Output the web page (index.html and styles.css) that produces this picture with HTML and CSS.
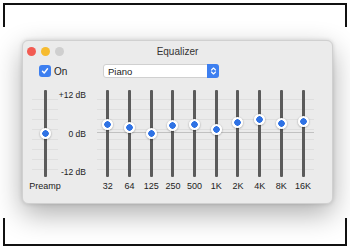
FILE: index.html
```html
<!DOCTYPE html>
<html lang="en">
<head>
    <meta charset="UTF-8">
    <title>Equalizer</title>
    <link rel="stylesheet" href="styles.css">
</head>
<body>
    <div class="frame">
        <div class="window">
            <div class="titlebar">
                <div class="lights">
                    <span class="light red"></span>
                    <span class="light yellow"></span>
                    <span class="light gray"></span>
                </div>
                <div class="title">Equalizer</div>
            </div>

            <div class="controls">
                <label class="toggle">
                    <span class="checkbox">
                        <svg width="8" height="8" viewBox="0 0 8 8"><path d="M1.5 4.2 L3.2 6 L6.5 1.8" fill="none" stroke="#fff" stroke-width="1.4" stroke-linecap="round" stroke-linejoin="round"/></svg>
                    </span>
                    On
                </label>
                <div class="popup">
                    <span>Piano</span>
                    <span class="stepper">
                        <svg width="7" height="10" viewBox="0 0 7 10"><path d="M1.5 4 L3.5 2 L5.5 4 M1.5 6 L3.5 8 L5.5 6" fill="none" stroke="#fff" stroke-width="1.1" stroke-linecap="round" stroke-linejoin="round"/></svg>
                    </span>
                </div>
            </div>

            <div class="sliders">
                <div class="band preamp">
                    <div class="track-area">
                        <div class="track"></div>
                        <span class="knob" style="top: 43px"></span>
                    </div>
                    <div class="label">Preamp</div>
                </div>
                <div class="scale">
                    <span>+12 dB</span>
                    <span>0 dB</span>
                    <span>-12 dB</span>
                </div>
                <div class="bands" id="bands"></div>
            </div>
        </div>
    </div>

    <script>
        // Piano preset, gain in dB for each band
        const bands = [
            { label: '32', gain: 2.7 },
            { label: '64', gain: 1.7 },
            { label: '125', gain: 0 },
            { label: '250', gain: 2.4 },
            { label: '500', gain: 2.7 },
            { label: '1K', gain: 1.2 },
            { label: '2K', gain: 3.3 },
            { label: '4K', gain: 4.2 },
            { label: '8K', gain: 3 },
            { label: '16K', gain: 3.6 }
        ];

        const container = document.getElementById('bands');
        bands.forEach(band => {
            // 0 dB sits 43px down the track, 12 dB is 40px
            const top = 43 - band.gain * 40 / 12;
            const el = document.createElement('div');
            el.className = 'band';
            el.innerHTML = `
                <div class="track-area">
                    <div class="track"></div>
                    <span class="knob" style="top: ${top.toFixed(1)}px"></span>
                </div>
                <div class="label">${band.label}</div>
            `;
            container.appendChild(el);
        });
    </script>
</body>
</html>
```

FILE: styles.css
```css
* {
    margin: 0;
    padding: 0;
    box-sizing: border-box;
}

body {
    background: #ffffff;
    font-family: 'Liberation Sans', Arial, sans-serif;
    color: #222;
}

/* Outer frame, only the corners of the sides are drawn */
.frame {
    position: relative;
    margin: 3px 0 0 3px;
    width: 344px;
    height: 243px;
    border-top: 2px solid #111;
    border-bottom: 2px solid #111;
    padding: 35px 0 0 19px;
}

.frame::before,
.frame::after {
    content: '';
    position: absolute;
    left: 0;
    right: 0;
    border-left: 2px solid #111;
    border-right: 2px solid #111;
}

.frame::before {
    top: 0;
    height: 22px;
}

.frame::after {
    bottom: 0;
    height: 26px;
}

/* Window */
.window {
    width: 311px;
    height: 164px;
    background: #ebebeb;
    border: 1px solid #d0d0d0;
    border-radius: 6px;
    box-shadow: 0 10px 28px rgba(0,0,0,0.32), 0 0 4px rgba(0,0,0,0.15);
}

.titlebar {
    position: relative;
    height: 21px;
    display: flex;
    align-items: center;
    padding-left: 4px;
}

.lights {
    display: flex;
    gap: 5px;
}

.light {
    width: 9px;
    height: 9px;
    border-radius: 50%;
}

.red { background: #f25b52; }
.yellow { background: #f6bb2f; }
.gray { background: #cfcfcf; }

.title {
    position: absolute;
    left: 0;
    right: 0;
    text-align: center;
    font-size: 10px;
    color: #333;
}

.controls {
    margin-top: 2px;
    height: 14px;
    display: flex;
    align-items: center;
    padding-left: 16px;
}

.toggle {
    display: flex;
    align-items: center;
    gap: 3px;
    font-size: 10px;
    width: 64px;
}

.checkbox {
    width: 12px;
    height: 12px;
    border-radius: 3px;
    background: #3d7ff0;
    display: flex;
    align-items: center;
    justify-content: center;
}

.popup {
    width: 116px;
    height: 14px;
    background: #fff;
    border: 1px solid #d0d0d0;
    border-radius: 3px;
    display: flex;
    align-items: center;
    justify-content: space-between;
    padding-left: 4px;
    font-size: 9.5px;
}

.stepper {
    width: 12px;
    height: 14px;
    margin-right: -1px;
    background: #3d7ff0;
    border-radius: 0 3px 3px 0;
    display: flex;
    align-items: center;
    justify-content: center;
}

/* Sliders */
.sliders {
    margin-top: 12px;
    display: flex;
    padding-left: 6px;
}

.band {
    width: 21.7px;
    display: flex;
    flex-direction: column;
    align-items: center;
}

.band.preamp {
    width: 32px;
}

.track-area {
    position: relative;
    width: 100%;
    height: 87px;
    display: flex;
    justify-content: center;
}

.preamp .track-area {
    width: 26px;
    background: repeating-linear-gradient(to bottom, transparent 0, transparent 9px, rgba(0,0,0,0.05) 9px, rgba(0,0,0,0.05) 10px);
}

.track {
    width: 3px;
    height: 100%;
    background: #5b5b5b;
    border-radius: 1px;
}

.knob {
    position: absolute;
    left: 50%;
    width: 11px;
    height: 11px;
    margin: -5.5px 0 0 -5.5px;
    border-radius: 50%;
    background: radial-gradient(circle, #2f72e4 0, #2f72e4 3px, #ffffff 3.5px);
    box-shadow: 0 0.5px 2px rgba(0,0,0,0.4);
}

.label {
    margin-top: 4px;
    font-size: 9px;
    line-height: 10px;
    color: #222;
    white-space: nowrap;
}

.scale {
    width: 25px;
    height: 87px;
    display: flex;
    flex-direction: column;
    justify-content: space-between;
    align-items: flex-end;
    font-size: 8.5px;
    white-space: nowrap;
}

.bands {
    display: flex;
    margin-left: 11px;
    height: 101px;
    background:
        linear-gradient(to bottom, transparent 42px, rgba(0,0,0,0.18) 42px, rgba(0,0,0,0.18) 43px, transparent 43px) 0 0 / 100% 87px no-repeat,
        repeating-linear-gradient(to bottom, transparent 0, transparent 9px, rgba(0,0,0,0.05) 9px, rgba(0,0,0,0.05) 10px) 0 0 / 100% 87px no-repeat;
}
```
